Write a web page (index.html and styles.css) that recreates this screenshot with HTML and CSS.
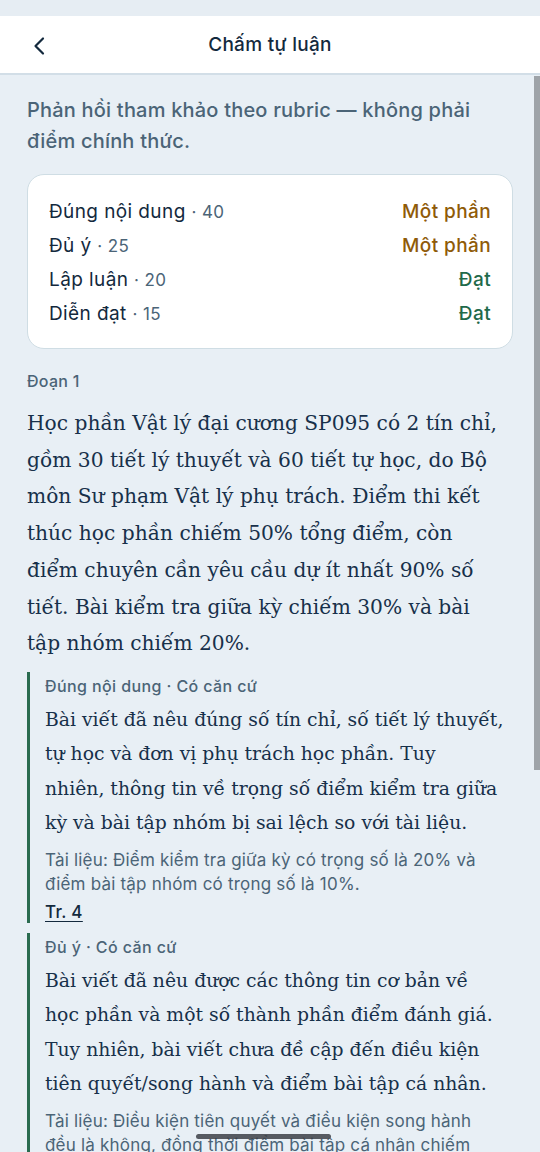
FILE: index.html
```html
<!DOCTYPE html>
<html lang="vi">
<head>
<meta charset="utf-8">
<title>Chấm tự luận</title>
<link rel="stylesheet" href="styles.css">
</head>
<body>
<div class="screen">
  <div class="statusbar"></div>
  <header class="topbar">
    <button class="back" aria-label="Quay lại">
      <svg viewBox="0 0 24 24" width="24" height="24"><path d="M15 4.5 L7.5 12 L15 19.5" fill="none" stroke="#13293d" stroke-width="2.2" stroke-linecap="round" stroke-linejoin="round"/></svg>
    </button>
    <h1 class="title">Chấm tự luận</h1>
  </header>
  <main class="content">
    <p class="intro">Phản hồi tham khảo theo rubric — không phải điểm chính thức.</p>
    <section class="card">
      <div class="row"><span class="crit">Đúng nội dung <span class="pts">· 40</span></span><span class="st partial">Một phần</span></div>
      <div class="row"><span class="crit">Đủ ý <span class="pts">· 25</span></span><span class="st partial">Một phần</span></div>
      <div class="row"><span class="crit">Lập luận <span class="pts">· 20</span></span><span class="st pass">Đạt</span></div>
      <div class="row"><span class="crit">Diễn đạt <span class="pts">· 15</span></span><span class="st pass">Đạt</span></div>
    </section>
    <div class="seg-label">Đoạn 1</div>
    <p class="essay">Học phần Vật lý đại cương SP095 có 2 tín chỉ, gồm 30 tiết lý thuyết và 60 tiết tự học, do Bộ môn Sư phạm Vật lý phụ trách. Điểm thi kết thúc học phần chiếm 50% tổng điểm, còn điểm chuyên cần yêu cầu dự ít nhất 90% số tiết. Bài kiểm tra giữa kỳ chiếm 30% và bài tập nhóm chiếm 20%.</p>
    <div class="fb">
      <div class="fb-label">Đúng nội dung · Có căn cứ</div>
      <p class="fb-text">Bài viết đã nêu đúng số tín chỉ, số tiết lý thuyết,<br>tự học và đơn vị phụ trách học phần. Tuy<br>nhiên, thông tin về trọng số điểm kiểm tra giữa<br>kỳ và bài tập nhóm bị sai lệch so với tài liệu.</p>
      <p class="fb-src">Tài liệu: Điểm kiểm tra giữa kỳ có trọng số là 20% và điểm bài tập nhóm có trọng số là 10%.</p>
      <a class="fb-page">Tr. 4</a>
    </div>
    <div class="fb">
      <div class="fb-label">Đủ ý · Có căn cứ</div>
      <p class="fb-text">Bài viết đã nêu được các thông tin cơ bản về<br>học phần và một số thành phần điểm đánh giá.<br>Tuy nhiên, bài viết chưa đề cập đến điều kiện<br>tiên quyết/song hành và điểm bài tập cá nhân.</p>
      <p class="fb-src">Tài liệu: Điều kiện tiên quyết và điều kiện song hành đều là không, đồng thời điểm bài tập cá nhân chiếm 10% tổng điểm học phần.</p>
      <a class="fb-page">Tr. 4</a>
    </div>
  </main>
  <div class="scrollbar"></div>
  <div class="home-indicator"></div>
</div>
</body>
</html>
```
FILE: styles.css
```css
* { box-sizing: border-box; }
html, body { margin: 0; padding: 0; }
body {
  background: #e8eff5;
  font-family: "Inter", "Noto Sans", sans-serif;
  color: #13293d;
}
.screen {
  position: relative;
  width: 540px;
  height: 1152px;
  overflow: hidden;
  background: #e8eff5;
}
.statusbar {
  height: 16px;
  background: #e6edf3;
}
.topbar {
  height: 59px;
  background: #ffffff;
  border-bottom: 2px solid #d2dee7;
  display: flex;
  align-items: center;
  justify-content: center;
  position: relative;
}
.back {
  position: absolute;
  left: 27px;
  top: 17px;
  width: 26px;
  height: 26px;
  padding: 0;
  border: 0;
  background: none;
  display: flex;
  align-items: center;
  justify-content: center;
}
.title {
  margin: 0;
  font-size: 19px;
  font-weight: 500;
  color: #13293d;
  letter-spacing: 0.3px;
}
.content {
  padding: 20px 27px 0 27px;
}
.intro {
  margin: 0;
  font-size: 20px;
  line-height: 31px;
  letter-spacing: 0.2px;
  color: #4b6477;
  font-weight: 500;
  padding-right: 20px;
}
.card {
  margin-top: 17px;
  background: #ffffff;
  border: 1px solid #cfdde4;
  border-radius: 17px;
  padding: 19px 21px 18px 21px;
}
.row {
  display: flex;
  justify-content: space-between;
  align-items: center;
  height: 34px;
  font-size: 19px;
  letter-spacing: 0.4px;
}
.crit { color: #13293d; }
.pts { color: #4b6477; font-size: 17px; }
.st { font-weight: 500; }
.partial { color: #8f5b08; }
.pass { color: #1f6a4a; }
.seg-label {
  margin-top: 22px;
  font-size: 16px;
  line-height: 20px;
  letter-spacing: 0.3px;
  color: #4b6477;
  font-weight: 500;
}
.essay {
  margin: 14px 0 10px 0;
  font-family: "DejaVu Serif", "Liberation Serif", serif;
  font-size: 20.2px;
  line-height: 36.7px;
  color: #17304a;
  padding-right: 11px;
}
.fb {
  border-left: 3px solid #2a6b4f;
  padding: 4px 0 0 15px;
  margin-bottom: 10px;
}
.fb-label {
  font-size: 16px;
  line-height: 20px;
  letter-spacing: 0.4px;
  color: #4b6477;
  font-weight: 500;
}
.fb-text {
  margin: 7px -12px 0 0;
  font-family: "DejaVu Serif", "Liberation Serif", serif;
  font-size: 18.8px;
  line-height: 34.5px;
  color: #17304a;
}
.fb-src {
  margin: 7px 0 0 0;
  font-size: 17px;
  line-height: 24px;
  letter-spacing: 0.2px;
  color: #4b6477;
  padding-right: 20px;
}
.fb-page {
  display: inline-block;
  margin-top: 5px;
  font-size: 17px;
  line-height: 22px;
  letter-spacing: 0.3px;
  font-weight: 500;
  color: #13293d;
  text-decoration: underline;
  text-underline-offset: 3px;
}
.scrollbar {
  position: absolute;
  right: 0;
  top: 76px;
  width: 6px;
  height: 694px;
  background: #9ea3a8;
}
.home-indicator {
  position: absolute;
  left: 196px;
  top: 1134px;
  width: 135px;
  height: 5px;
  border-radius: 3px;
  background: rgba(60, 64, 70, 0.85);
}
```
